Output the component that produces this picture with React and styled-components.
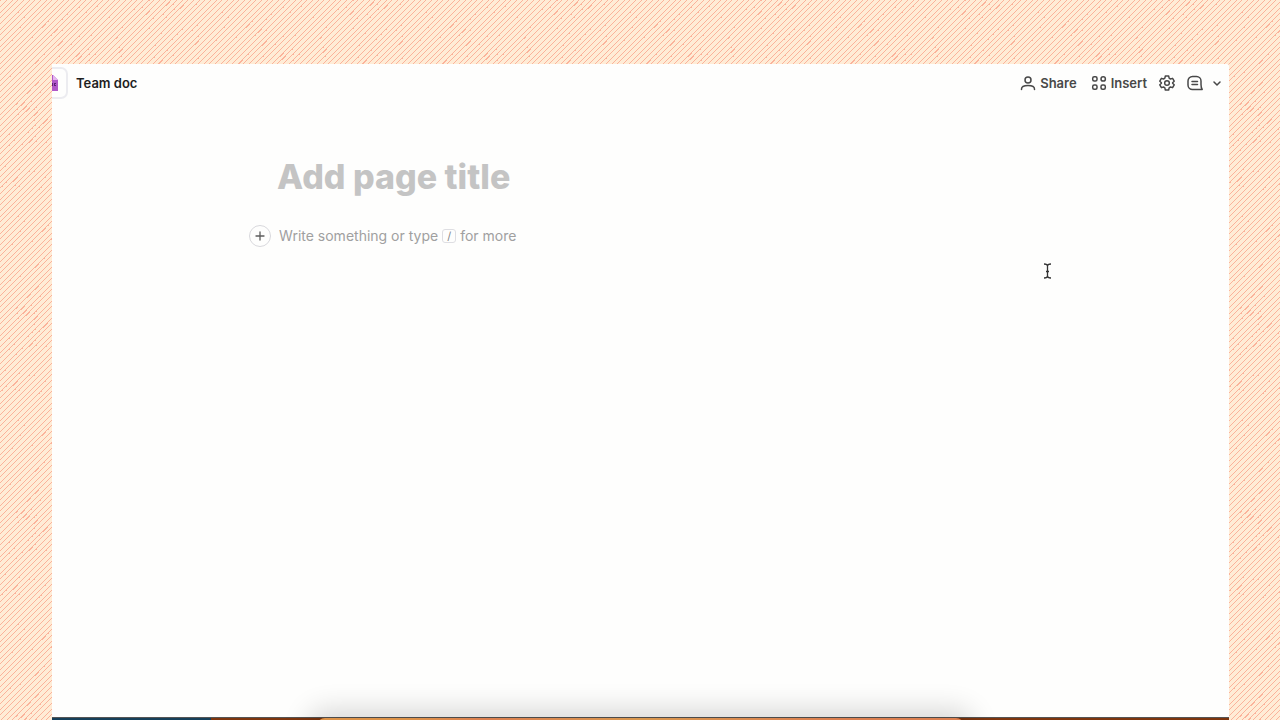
import React, { useState } from 'react'

import styled, { createGlobalStyle } from "styled-components";

// dots of an uneven hatch: lines at 0, 6 and 12 of every 17 pixels,
// thickened at a few scattered spots
const TILE = 204;
const OFFSETS = [0, 6, 12];

const hatchPath = () => {
  let d = "";
  for (let y = 0; y < 17; y++) {
    OFFSETS.forEach((o) => {
      d += `M${(o - y + 17) % 17} ${y}h1v1h-1z`;
    });
  }
  return d;
}

const speckPath = () => {
  let d = "";
  let seed = 7;
  const next = (max) => {
    seed = (seed * 16807) % 2147483647;
    return seed % max;
  };
  for (let i = 0; i < 220; i++) {
    const y = next(TILE - 8);
    const x = next(12) * 17 + OFFSETS[next(3)] + 17 - (y % 17);
    const length = i % 6 === 0 ? 4 : 1;
    for (let k = 0; k < length; k++) {
      d += `M${x + 1 - k} ${y + k}h1v1h-1z`;
    }
  }
  return d;
}

const hatch = `url("data:image/svg+xml,${encodeURIComponent(
  `<svg xmlns="http://www.w3.org/2000/svg" width="${TILE}" height="${TILE}" shape-rendering="crispEdges">
    <defs>
      <pattern id="h" width="17" height="17" patternUnits="userSpaceOnUse">
        <path fill="#fbb39b" d="${hatchPath()}"/>
      </pattern>
    </defs>
    <rect width="${TILE}" height="${TILE}" fill="#ffecd6"/>
    <rect width="${TILE}" height="${TILE}" fill="url(#h)"/>
    <path fill="#fbb39b" d="${speckPath()}"/>
  </svg>`
)}")`;

const GlobalStyle = createGlobalStyle`
  * {
    box-sizing: border-box;
  }

  body {
    margin: 0;
    font-family: Inter, sans-serif;
    color: #1f1f1f;
  }

  button, input {
    font: inherit;
    color: inherit;
    border: 0;
    padding: 0;
    background: none;
  }
`

const Backdrop = styled.div`
  height: 100vh;
  display: flex;
  padding: 64px 51px 0 52px;
  background: #ffecd6 ${hatch};
  overflow: hidden;
`

const Window = styled.div`
  flex: 1;
  min-width: 0;
  display: flex;
  flex-direction: column;
  background-color: #fefefd;
  border-radius: 0 2px 0 0;
  overflow: hidden;
`

const Header = styled.header`
  height: 38px;
  flex: 0 0 auto;
  display: flex;
  align-items: center;
  justify-content: space-between;
  padding-right: 8px;
`

const DocName = styled.div`
  display: flex;
  align-items: center;
  gap: 8px;
  font-size: 13px;
  font-weight: 600;
`

const DocIcon = styled.button`
  width: 16px;
  height: 32px;
  display: flex;
  align-items: center;
  border: 2px solid #ececf0;
  border-left: 0;
  border-radius: 0 7px 7px 0;
`

const Toolbar = styled.nav`
  display: flex;
  align-items: center;
  gap: 12px;
  color: #484848;
`

const ToolGroup = styled.div`
  display: flex;
  gap: ${(props) => props.$gap};
`

const ToolButton = styled.button`
  display: flex;
  align-items: center;
  gap: 4px;
  font-size: 13px;
  font-weight: 600;
`

const Editor = styled.main`
  flex: 1;
  display: flex;
  flex-direction: column;
  gap: 24px;
  width: 66%;
  margin: 0 auto;
  padding: 50px 24px 0 25px;
`

const TitleInput = styled.input`
  width: 100%;
  height: 48px;
  font-size: 34px;
  font-weight: 800;
  outline: none;

  &::placeholder {
    color: #c4c4c4;
    opacity: 1;
  }
`

const Line = styled.div`
  display: flex;
  align-items: center;
  gap: 8px;
  margin-left: -28px;
`

const AddButton = styled.button`
  width: 22px;
  height: 22px;
  display: flex;
  align-items: center;
  justify-content: center;
  border: 1px solid #d8d8dc;
  border-radius: 50%;
  color: #5c5c5c;
`

const Hint = styled.p`
  display: flex;
  align-items: center;
  gap: 4px;
  margin: 0;
  font-size: 14px;
  line-height: 24px;
  color: #a0a0a0;
`

const Key = styled.kbd`
  width: 14px;
  height: 14px;
  display: flex;
  align-items: center;
  justify-content: center;
  border: 1px solid #dedee2;
  border-radius: 3px;
  font-family: inherit;
  font-size: 11px;
  color: #858585;
`

const Dock = styled.div`
  height: 3px;
  flex: 0 0 auto;
  border-top: 1px solid #555;
  background: linear-gradient(90deg, #163f59 13.5%, #7d350e 13.5%);
`

const DockShelf = styled.div`
  width: 55%;
  height: 80px;
  margin: 0 auto;
  border-radius: 8px 8px 0 0;
  background: linear-gradient(90deg, #dd9349 14%, #dc8051 26%, #d9984f 50%, #dc8051 80%);
  box-shadow: 0 0 28px 8px rgba(0, 0, 0, 0.16);
`

const TextCursor = styled.svg`
  position: absolute;
  left: 1043px;
  top: 263px;
`

const Icon = ({ size = 16, children, ...rest }) => (
  <svg width={size} height={size} viewBox={`0 0 ${size} ${size}`} fill="none"
    stroke="currentColor" strokeWidth="1.5" strokeLinecap="round" strokeLinejoin="round"
    aria-hidden="true" {...rest}>
    {children}
  </svg>
)

const App = () => {
  const [title, setTitle] = useState("");

  return (
    <Backdrop>
      <GlobalStyle />
      <Window>
        <Header>
          <DocName>
            <DocIcon aria-label="Change icon">
              <svg width="6" height="16" viewBox="0 0 6 16">
                <path fill="#b057c8" d="M0 0h1l5 5v11H0z" />
                <path fill="#e3b5ee" d="M1 0v5h5z" />
                <path fill="#5c1f77" d="M0 8h1v3H0zM2 8h2v1H3v1h1v1H2z" />
              </svg>
            </DocIcon>
            Team doc
          </DocName>
          <Toolbar>
            <ToolGroup $gap="14px">
              <ToolButton>
                <Icon>
                  <circle cx="8" cy="5" r="3" />
                  <path d="M1.500 14.500v-.5C1.500 11.500 4.500 10.500 8 10.500s6.500 1 6.500 3.500v.5" />
                </Icon>
                Share
              </ToolButton>
              <ToolButton>
                <Icon>
                  <rect x="1.700" y="1.700" width="4.300" height="4.300" rx="1.500" />
                  <circle cx="12.200" cy="3.900" r="2.200" />
                  <rect x="1.700" y="10" width="4.300" height="4.300" rx="1.500" />
                  <rect x="10" y="10" width="4.300" height="4.300" rx="1.500" />
                </Icon>
                Insert
              </ToolButton>
            </ToolGroup>
            <ToolButton aria-label="Settings">
              <Icon viewBox="0 0 24 24" strokeWidth="2.200">
                <path d="M9.500 1.500h5l.7 3.300 2 1.200 3.200-1 2.400 4.300-2.400 2.200v1l2.400 2.200-2.400 4.300-3.200-1-2 1.200-.7 3.300h-5l-.7-3.300-2-1.200-3.200 1-2.400-4.300 2.400-2.200v-1L1.200 9.300 3.600 5l3.200 1 2-1.200z" />
                <circle cx="12" cy="12" r="3.500" />
              </Icon>
            </ToolButton>
            <ToolGroup $gap="10px">
              <ToolButton aria-label="Comments">
                <Icon>
                  <path d="M14 9.500V6A4.500 4.500 0 0 0 9.500 1.500h-4A4.500 4.500 0 0 0 1 6v4a4.500 4.500 0 0 0 4.500 4.500H15.200C14.200 13 14 11.500 14 9.500z" />
                  <path d="M5 6.500h5.500M5 9.500h5.500" />
                </Icon>
              </ToolButton>
              <ToolButton aria-label="More">
                <Icon size={8}>
                  <path d="M1 3l3 3 3-3" />
                </Icon>
              </ToolButton>
            </ToolGroup>
          </Toolbar>
        </Header>
        <Editor>
          <TitleInput
            aria-label="Page title"
            placeholder="Add page title"
            value={title}
            onChange={(e) => setTitle(e.target.value)}
          />
          <Line>
            <AddButton aria-label="Add block">
              <Icon size={10} strokeWidth="1.300">
                <path d="M5 1v8M1 5h8" />
              </Icon>
            </AddButton>
            <Hint>Write something or type <Key>/</Key> for more</Hint>
          </Line>
        </Editor>
        <Dock>
          <DockShelf />
        </Dock>
      </Window>
      <TextCursor width="9" height="16" viewBox="0 0 9 16" fill="none" stroke="#333" strokeWidth="1.300">
        <path d="M1 1c2 0 3.500.5 3.500 2v10c0 1.500-1.500 2-3.500 2M8 1C6 1 4.500 1.500 4.500 3M8 15c-2 0-3.500-.5-3.500-2M3 8.500h3" />
      </TextCursor>
    </Backdrop>
  )
}

export default App
